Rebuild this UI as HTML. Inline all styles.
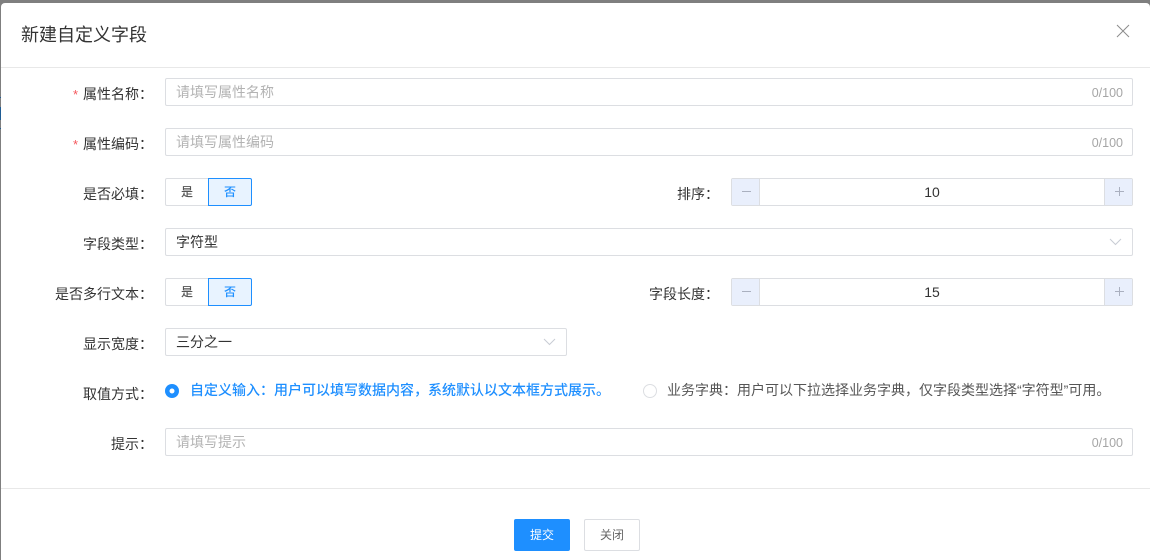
<!DOCTYPE html>
<html lang="zh-CN"><head><meta charset="utf-8"><title>新建自定义字段</title>
<style>
*{box-sizing:border-box}
html,body{margin:0;padding:0;width:1150px;height:560px;overflow:hidden;background:#7f7f7f;font-family:"Liberation Sans","Noto Sans CJK SC",sans-serif}
.strip{position:absolute;left:0;width:1px;background:#1f5c94}
.modal{position:absolute;left:1px;top:3px;width:1149px;height:557px;background:#fff;border-radius:4px 4px 0 0}
.a{position:absolute;white-space:nowrap}
.hr{position:absolute;left:1px;width:1149px;height:1px;background:#e8e8e8}
.lab{position:absolute;width:153px;left:0;text-align:right;font-size:14px;line-height:20px;color:#333;white-space:nowrap}
.lab i{font-style:normal;color:#f5565b;margin-right:5px;font-size:13px;font-family:"Liberation Sans",sans-serif}
.box{position:absolute;height:28px;border:1px solid #dcdee2;border-radius:2px;background:#fff;font-size:14px;line-height:27px;padding-left:10px;color:#333;white-space:nowrap}
.ph{color:#b3b3b3}
.cnt{position:absolute;right:9px;top:1px;font-size:12.500px;color:#a6a6a6}
.t1,.t2{position:absolute;top:0;height:28px;font-size:12px;line-height:26px;text-align:center;font-weight:500}
.t1{left:0;width:44px;border:1px solid #dcdee2;border-radius:2px 0 0 2px;color:#555;background:#fff}
.t2{left:43px;width:44px;border:1px solid #1e8fff;border-radius:0 2px 2px 0;color:#1e8fff;background:#e8f3ff}
.num{position:absolute;left:731px;width:402px;height:28px;border:1px solid #dcdee2;border-radius:2px;text-align:center;font-size:14px;line-height:26px;color:#333}
.m,.p{position:absolute;top:0;width:28px;height:26px;background:#e9effc}
.m{left:0;border-right:1px solid #dcdee2}.p{right:0;border-left:1px solid #dcdee2}
.btn{position:absolute;top:519px;width:56px;height:32px;border-radius:2px;font-size:12px;line-height:30px;text-align:center}
svg{position:absolute;display:block}
</style></head><body>
<div class="strip" style="top:97px;height:1px"></div>
<div class="strip" style="top:107px;height:13px"></div>
<div class="strip" style="top:128px;height:1px"></div>
<div class="modal"></div>
<div class="a" style="left:21px;top:23px;font-size:18px;line-height:24px;color:#333;">新建自定义字段</div>
<svg style="left:1116px;top:24px" width="14" height="14" viewBox="0 0 14 14"><path d="M1 1L13 13M13 1L1 13" stroke="#8c8c8c" stroke-width="1" fill="none"/></svg>
<div class="hr" style="top:67px"></div>
<div class="hr" style="top:488px"></div>

<div class="lab" style="top:84px"><i>*</i>属性名称：</div>
<div class="box" style="left:165px;top:78px;width:968px"><span class="ph">请填写属性名称</span><span class="cnt">0/100</span></div>
<div class="lab" style="top:134px"><i>*</i>属性编码：</div>
<div class="box" style="left:165px;top:128px;width:968px"><span class="ph">请填写属性编码</span><span class="cnt">0/100</span></div>

<div class="lab" style="top:184px">是否必填：</div>
<div class="a" style="left:165px;top:178px;width:87px;height:28px"><div class="t1">是</div><div class="t2">否</div></div>
<div class="lab" style="left:566px;top:184px">排序：</div>
<div class="num" style="top:178px"><div class="m"><svg style="left:10px;top:12px" width="9" height="1"><rect width="9" height="1" fill="#aab0bf"/></svg></div>10<div class="p"><svg style="left:10px;top:8px" width="9" height="9"><path d="M0 4.500H9M4.500 0V9" stroke="#aab0bf" fill="none"/></svg></div></div>

<div class="lab" style="top:234px">字段类型：</div>
<div class="box" style="left:165px;top:228px;width:968px">字符型
<svg style="right:10px;top:9px" width="13" height="8" viewBox="0 0 13 8"><path d="M1 1L6.500 6.500L12 1" stroke="#c8ccd4" fill="none"/></svg></div>

<div class="lab" style="top:284px">是否多行文本：</div>
<div class="a" style="left:165px;top:278px;width:87px;height:28px"><div class="t1">是</div><div class="t2">否</div></div>
<div class="lab" style="left:566px;top:284px">字段长度：</div>
<div class="num" style="top:278px"><div class="m"><svg style="left:10px;top:12px" width="9" height="1"><rect width="9" height="1" fill="#aab0bf"/></svg></div>15<div class="p"><svg style="left:10px;top:8px" width="9" height="9"><path d="M0 4.500H9M4.500 0V9" stroke="#aab0bf" fill="none"/></svg></div></div>

<div class="lab" style="top:334px">显示宽度：</div>
<div class="box" style="left:165px;top:328px;width:402px">三分之一
<svg style="right:10px;top:9px" width="13" height="8" viewBox="0 0 13 8"><path d="M1 1L6.500 6.500L12 1" stroke="#c8ccd4" fill="none"/></svg></div>

<div class="lab" style="top:384px">取值方式：</div>
<svg style="left:165px;top:384px" width="14" height="14" viewBox="0 0 14 14"><circle cx="7" cy="7" r="7" fill="#1e8fff"/><circle cx="7" cy="7" r="2.500" fill="#fff"/></svg>
<div class="a" style="left:190px;top:380px;font-size:14px;line-height:20px;color:#1e8fff;font-weight:500">自定义输入：用户可以填写数据内容，系统默认以文本框方式展示。</div>
<svg style="left:643px;top:384px" width="14" height="14" viewBox="0 0 14 14"><circle cx="7" cy="7" r="6.500" fill="#fff" stroke="#dcdee2"/></svg>
<div class="a" style="left:667px;top:380px;font-size:14px;line-height:20px;color:#555">业务字典：用户可以下拉选择业务字典，仅字段类型选择“字符型”可用。</div>

<div class="lab" style="top:434px">提示：</div>
<div class="box" style="left:165px;top:428px;width:968px"><span class="ph">请填写提示</span><span class="cnt">0/100</span></div>

<div class="btn" style="left:514px;background:#1e8fff;color:#fff;border:1px solid #1e8fff">提交</div>
<div class="btn" style="left:584px;background:#fff;color:#666;border:1px solid #dcdee2">关闭</div>
</body></html>
